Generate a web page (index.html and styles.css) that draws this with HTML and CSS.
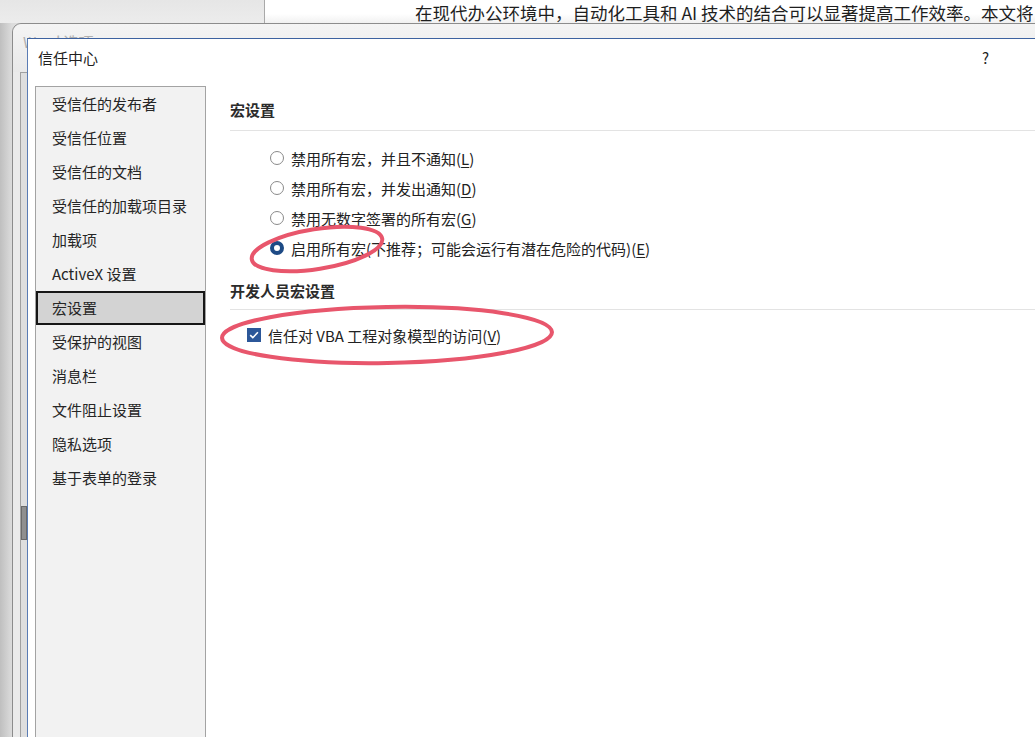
FILE: index.html
```html
<!DOCTYPE html>
<html lang="zh-CN">

<head>
    <meta charset="UTF-8">
    <meta name="viewport" content="width=device-width, initial-scale=1.0">
    <title>信任中心</title>
    <link rel="stylesheet" href="styles.css">
</head>

<body>
    <div class="doc-strip">
        <div class="doc-side"></div>
        <div class="doc-page">
            <p>在现代办公环境中，自动化工具和 AI 技术的结合可以显著提高工作效率。本文将</p>
        </div>
    </div>

    <!-- window behind: Word 选项 -->
    <div class="back-win">
        <div class="back-title">
            <span>Word 选项</span>
            <span class="back-ctrl">?&nbsp;&nbsp;&nbsp;&nbsp;&nbsp;&nbsp;&nbsp;&nbsp;✕</span>
        </div>
        <div class="back-body">
            <div class="back-scroll">
                <div class="thumb"></div>
            </div>
        </div>
    </div>

    <!-- trust center dialog -->
    <div class="dialog">
        <div class="dlg-title">
            <span>信任中心</span>
            <span class="help">?</span>
        </div>
        <div class="dlg-body">
            <ul class="nav">
                <li>受信任的发布者</li>
                <li>受信任位置</li>
                <li>受信任的文档</li>
                <li>受信任的加载项目录</li>
                <li>加载项</li>
                <li>ActiveX 设置</li>
                <li class="active">宏设置</li>
                <li>受保护的视图</li>
                <li>消息栏</li>
                <li>文件阻止设置</li>
                <li>隐私选项</li>
                <li>基于表单的登录</li>
            </ul>
            <div class="panel">
                <h3 class="section">宏设置</h3>
                <ul class="options">
                    <li><span class="radio"></span><span>禁用所有宏，并且不通知(<u>L</u>)</span></li>
                    <li><span class="radio"></span><span>禁用所有宏，并发出通知(<u>D</u>)</span></li>
                    <li><span class="radio"></span><span>禁用无数字签署的所有宏(<u>G</u>)</span></li>
                    <li><span class="radio checked"></span><span>启用所有宏(不推荐；可能会运行有潜在危险的代码)(<u>E</u>)</span></li>
                </ul>
                <h3 class="section dev">开发人员宏设置</h3>
                <div class="check-row">
                    <span class="checkbox">
                        <svg width="14" height="14" viewBox="0 0 14 14">
                            <path d="M3.2 7.2 L5.8 9.7 L10.9 4.3" fill="none" stroke="#fff" stroke-width="1.6" />
                        </svg>
                    </span>
                    <span>信任对 VBA 工程对象模型的访问(<u>V</u>)</span>
                </div>
            </div>
        </div>
    </div>

    <!-- hand-drawn annotation rings -->
    <svg class="marks" width="1035" height="737" viewBox="0 0 1035 737">
        <ellipse cx="317" cy="249" rx="66" ry="20" transform="rotate(-9 317 249)" />
        <ellipse cx="387" cy="335" rx="165" ry="28" transform="rotate(-1 387 335)" />
    </svg>
</body>

</html>
```

FILE: styles.css
```css
*{
    margin: 0;
    padding: 0;
    box-sizing: border-box;
}
body{
    width: 1035px;
    height: 737px;
    overflow: hidden;
    position: relative;
    font-family: "Noto Sans CJK SC", "Noto Sans", sans-serif;
    text-autospace: no-autospace;
    color: #222;
    background: linear-gradient(to right, #bfbfbf, #dcdcdc 12px, #e6e6e6);
}
ul{
    list-style: none;
}

/* document behind everything */
.doc-strip{
    display: flex;
    height: 23px;
}
.doc-side{
    width: 265px;
    background: linear-gradient(to bottom, #e6e6e6, #ececec);
    border-right: 1px solid #a9a9a9;
}
.doc-page{
    flex: 1;
    background: linear-gradient(to bottom, #fff 60%, #f1f1f1);
    padding-left: 150px;
    overflow: hidden;
}
.doc-page p{
    white-space: nowrap;
    font-size: 17.5px;
    line-height: 28px;
    margin-top: -1px;
    color: #1e1e1e;
}

/* Word 选项 window */
.back-win{
    position: absolute;
    left: 12px;
    top: 23px;
    width: 1060px;
    height: 740px;
    border: 1px solid #8c8c8c;
    border-radius: 9px 0 0 0;
    background: #ebebeb;
    display: flex;
    flex-direction: column;
}
.back-title{
    height: 48px;
    display: flex;
    justify-content: space-between;
    padding: 7px 0 0 10px;
    font-size: 15px;
    color: #b0b0b0;
    background: linear-gradient(to bottom, #f4f4f4, #e9e9e9);
    border-radius: 9px 0 0 0;
}
.back-ctrl{
    margin-right: 40px;
    font-size: 11px;
    padding-top: 4px;
}
.back-body{
    flex: 1;
    margin-left: 7px;
    border-left: 1px solid #a0a0a0;
    border-top: 1px solid #a0a0a0;
    background: #fff;
}
.back-scroll{
    width: 6px;
    height: 100%;
    background: #dedede;
    padding-top: 433px;
}
.thumb{
    height: 34px;
    background: #8f8f8f;
    border: 1px solid #6a6a6a;
}

/* 信任中心 dialog */
.dialog{
    position: absolute;
    left: 27px;
    top: 38px;
    width: 1050px;
    height: 720px;
    background: #fff;
    border: 1px solid #3d62a0;
    border-left-color: #5a7cb4;
}
.dlg-title{
    height: 36px;
    display: flex;
    align-items: center;
    justify-content: space-between;
    padding: 0 87px 0 10px;
    font-size: 15px;
    color: #1f1f1f;
}
.help{
    font-size: 15px;
}
.dlg-body{
    display: flex;
    margin-top: 11px;
    height: 680px;
}
.nav{
    width: 171px;
    margin-left: 7px;
    background: #f2f2f2;
    border: 1px solid #a3a3a3;
    border-bottom: none;
}
.nav li{
    height: 34px;
    line-height: 33px;
    padding-left: 16px;
    font-size: 15px;
    color: #262626;
}
.nav li.active{
    background: #d3d3d3;
    border: 2px solid #161616;
    line-height: 29px;
    padding-left: 14px;
}
.panel{
    flex: 1;
    padding: 12px 0 0 24px;
}
.section{
    font-size: 15px;
    font-weight: 600;
    color: #2b2b2b;
    line-height: 24px;
    padding-bottom: 8px;
    border-bottom: 1px solid #e3e3e3;
}
.section.dev{
    margin-top: 16px;
    padding-bottom: 6px;
}
.options{
    margin-top: 12px;
    padding-left: 40px;
}
.options li{
    height: 30px;
    display: flex;
    align-items: center;
    gap: 7px;
    font-size: 15px;
    color: #222;
}
.radio{
    width: 14px;
    height: 14px;
    border-radius: 50%;
    border: 1px solid #8a8a8a;
    background: #fff;
}
.radio.checked{
    border: 4px solid #1d4a85;
}
u{
    text-underline-offset: 2px;
}
.check-row{
    margin-top: 10px;
    height: 30px;
    display: flex;
    align-items: center;
    gap: 7px;
    padding-left: 17px;
    font-size: 15px;
    color: #222;
}
.checkbox{
    width: 14px;
    height: 14px;
    background: #2c5799;
    display: flex;
}

/* red annotation rings */
.marks{
    position: absolute;
    left: 0;
    top: 0;
    pointer-events: none;
}
.marks ellipse{
    fill: none;
    stroke: #e8566c;
    stroke-width: 4;
}
```
